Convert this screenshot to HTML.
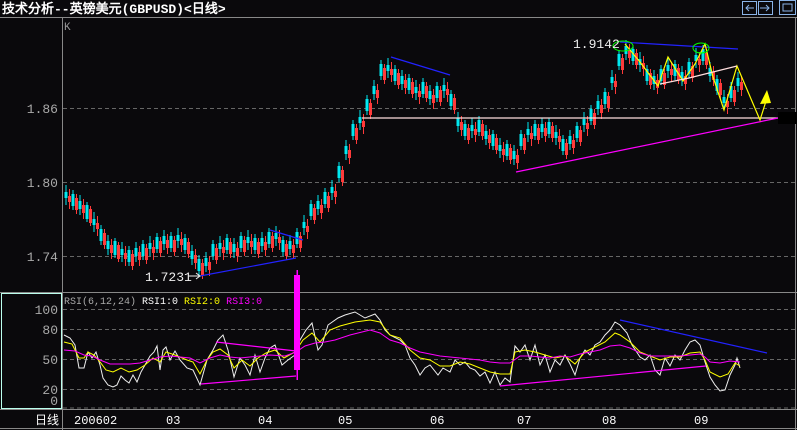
<!DOCTYPE html>
<html><head><meta charset="utf-8"><style>
html,body{margin:0;padding:0;background:#0a090c;width:797px;height:430px;overflow:hidden}
svg{display:block}
text{font-family:"Liberation Mono","WenQuanYi Zen Hei",monospace}
</style></head><body>
<svg width="797" height="430" viewBox="0 0 797 430" xmlns="http://www.w3.org/2000/svg" xmlns:xlink="http://www.w3.org/1999/xlink">
<defs>
<path id="W" fill="none" d="M66 185V205M73 190V210M80 195V215M87 202V222M94 212V232M101 225V245M108 235V255M115 238V258M122 242V262M129 246V266M136 242V262M143 240V260M150 236V256M157 233V253M164 230V250M171 232V252M178 228V248M185 234V254M192 245V265M199 255V275M206 252V272M213 240V260M220 236V256M227 234V254M234 238V258M241 232V252M248 230V250M255 234V254M262 232V252M269 228V248M276 226V246M283 236V256M290 235V255M297 228V248M304 215V235M311 200V220M318 195V215M325 188V208M332 180V200M339 162V182M346 140V160M353 120V140M360 110V130M367 95V115M374 80V100M381 60V80M388 58V78M395 65V85M402 70V90M409 74V94M416 80V100M423 78V98M430 85V105M437 82V102M444 78V98M451 90V110M458 112V132M465 120V140M472 118V138M479 116V136M486 125V145M493 130V150M500 138V158M507 140V160M514 145V165M521 130V150M528 122V142M535 120V140M542 118V138M549 118V138M556 125V145M563 135V155M570 130V150M577 122V142M584 112V132M591 105V125M598 95V115M605 88V108M612 70V90M619 50V70M626 40V60M633 45V65M640 52V72M647 65V85M654 70V90M661 65V85M668 58V78M675 60V80M682 66V86M689 58V78M696 48V68M703 45V65M710 62V82M717 75V95M724 90V110M731 82V102M738 72V92"/>
<path id="B" fill="none" d="M66 192V198M73 194V206M80 201V209M87 205V219M94 219V225M101 229V241M108 241V249M115 241V255M122 249V255M129 250V262M136 248V256M143 244V256M150 243V249M157 237V249M164 236V244M171 236V248M178 235V241M185 238V250M192 251V259M199 259V271M206 258V266M213 244V256M220 243V249M227 238V250M234 244V252M241 236V248M248 237V243M255 238V250M262 238V246M269 232V244M276 233V239M283 240V252M290 241V249M297 232V244M304 222V228M311 204V216M318 201V209M325 192V204M332 187V193M339 166V178M346 146V154M353 124V136M360 117V123M367 99V111M374 86V94M381 64V76M388 65V71M395 69V81M402 76V84M409 78V90M416 87V93M423 82V94M430 91V99M437 86V98M444 85V91M451 94V106M458 118V126M465 124V136M472 125V131M479 120V132M486 131V139M493 134V146M500 145V151M507 144V156M514 151V159M521 134V146M528 129V135M535 124V136M542 124V132M549 122V134M556 132V138M563 139V151M570 136V144M577 126V138M584 119V125M591 109V121M598 101V109M605 92V104M612 77V83M619 54V66M626 46V54M633 49V61M640 59V65M647 69V81M654 76V84M661 69V81M668 65V71M675 64V76M682 72V80M689 62V74M696 55V61M703 49V61M710 68V76M717 79V91M724 97V103M731 86V98M738 78V86"/>
</defs>
<rect width="797" height="430" fill="#0a090c"/>
<text x="2" y="13" fill="#fff" font-size="13" font-weight="bold" font-family="'Liberation Sans','WenQuanYi Zen Hei',sans-serif">技术分析--英镑美元(GBPUSD)&lt;日线&gt;</text>
<line x1="0" y1="17.5" x2="797" y2="17.5" stroke="#888"/>
<g fill="none" stroke="#8ab4e8">
<rect x="742.5" y="1.5" width="14" height="13"/><rect x="758.5" y="1.5" width="14" height="13"/><rect x="779.5" y="0.5" width="16" height="14"/><rect x="783" y="4" width="9" height="7"/>
<path d="M754 8H746M749 5L746 8L749 11M760 8H769M766 5L769 8L766 11"/>
</g>
<line x1="62.5" y1="18" x2="62.5" y2="430" stroke="#888"/>
<line x1="795.5" y1="18" x2="795.5" y2="430" stroke="#888"/>
<line x1="0" y1="292.5" x2="797" y2="292.5" stroke="#888"/>
<line x1="0" y1="409.5" x2="797" y2="409.5" stroke="#888"/>
<line x1="0" y1="428.5" x2="797" y2="428.5" stroke="#888"/>
<rect x="1.5" y="293.5" width="60" height="115" fill="none" stroke="#bfe"/>
<text x="64" y="30" fill="#999" font-size="11">K</text>
<g stroke="#666" stroke-dasharray="4,3">
<line x1="63" y1="108.5" x2="795" y2="108.5"/><line x1="63" y1="182.5" x2="795" y2="182.5"/><line x1="63" y1="256.5" x2="795" y2="256.5"/>
<line x1="63" y1="309.5" x2="795" y2="309.5"/><line x1="63" y1="329.5" x2="795" y2="329.5"/><line x1="63" y1="359.5" x2="795" y2="359.5"/><line x1="63" y1="389.5" x2="795" y2="389.5"/><line x1="63" y1="408" x2="795" y2="408"/>
</g>
<g fill="#aaa" font-size="13" text-anchor="end" font-family="'Liberation Sans',sans-serif">
<text x="58" y="113">1.86</text><text x="58" y="187">1.80</text><text x="58" y="261">1.74</text>
<text x="58" y="314">100</text><text x="58" y="334">80</text><text x="58" y="364">50</text><text x="58" y="394">20</text><text x="58" y="405">0</text>
</g>
<g fill="#fff" font-size="12" font-family="'Liberation Sans','WenQuanYi Zen Hei',sans-serif">
<text x="35" y="424">日线</text><text x="74" y="424">200602</text><text x="166" y="424">03</text><text x="258" y="424">04</text><text x="338" y="424">05</text><text x="430" y="424">06</text><text x="517" y="424">07</text><text x="602" y="424">08</text><text x="694" y="424">09</text>
</g>
<text x="64" y="304" font-size="10" fill="#aaa">RSI(6,12,24) <tspan fill="#fff">RSI1:0</tspan> <tspan fill="#ff0">RSI2:0</tspan> <tspan fill="#f0f">RSI3:0</tspan></text>

<g stroke="#00e8f0"><use xlink:href="#W" href="#W"/><use xlink:href="#B" href="#B" stroke-width="3"/></g>
<g stroke="#ff3a3a" transform="translate(3.5,4)"><use xlink:href="#W" href="#W"/><use xlink:href="#B" href="#B" stroke-width="3"/></g>

<polyline fill="none" stroke="#eee" points="64,335 70,338 75,345 79,368 84,368 88,352 92,358 96,352 100,365 103,378 108,385 113,387 117,385 121,376 125,380 129,383 133,375 137,382 141,372 145,365 150,356 154,352 157,346 160,370 163,350 166,347 170,360 175,351 180,360 187,368 193,370 200,385 207,360 213,350 218,340 223,335 228,350 234,377 240,358 245,365 250,375 255,355 260,372 265,358 270,348 275,345 282,365 288,360 295,355 300,340 306,330 312,323 318,350 322,345 328,325 338,318 345,315 355,312 365,318 375,314 380,320 385,330 390,335 400,340 405,345 410,358 415,365 420,375 425,368 430,365 438,375 443,368 450,372 455,360 460,365 465,362 470,368 475,370 480,376 485,372 490,383 495,372 500,385 505,378 510,382 515,346 520,352 525,345 530,360 535,345 540,365 545,355 550,372 555,360 560,365 565,355 570,364 575,375 580,358 585,350 590,355 595,345 600,342 605,335 610,330 615,322 620,325 627,333 632,345 640,357 645,360 650,355 655,370 660,375 665,358 670,366 675,355 680,360 685,350 690,342 695,340 700,345 705,362 710,377 715,385 720,391 725,390 730,375 735,365 737,358 740,368"/>
<polyline fill="none" stroke="#ff0" points="64,342 72,344 79,358 84,358 88,352 94,355 100,362 106,370 113,372 121,368 129,372 137,370 145,365 153,358 160,362 166,352 175,355 187,360 193,362 200,374 207,360 213,352 220,349 228,355 234,368 242,360 250,366 258,358 266,353 275,350 284,358 295,352 303,340 312,333 320,342 330,330 340,326 355,322 370,320 380,322 390,335 400,338 410,350 420,358 430,360 440,366 450,366 460,362 470,364 480,368 490,372 500,374 510,374 515,352 525,350 535,352 545,355 555,358 565,356 575,364 585,352 595,347 605,342 615,333 620,335 630,342 640,352 650,356 660,360 670,357 680,357 690,353 700,352 705,360 710,372 720,377 728,374 735,363 740,366"/>
<polyline fill="none" stroke="#f0f" points="64,350 75,351 84,355 92,356 100,360 110,364 120,364 130,364 140,363 150,360 160,357 170,356 180,357 190,358 200,363 210,358 220,355 230,357 240,358 250,357 260,356 270,355 285,356 296,352 305,346 315,343 325,342 335,340 350,335 370,330 380,333 390,340 400,343 410,348 420,352 430,354 440,356 450,357 460,358 470,359 480,360 490,362 500,363 510,363 520,356 530,356 540,357 550,358 560,356 570,357 580,354 590,352 600,350 610,346 620,345 630,348 640,353 650,356 660,356 670,356 680,356 690,355 700,354 705,357 710,362 720,363 730,361 740,362"/>

<line x1="362" y1="118" x2="778" y2="118" stroke="#fdd" stroke-width="1.2"/>
<line x1="516" y1="172" x2="778" y2="118" stroke="#f0f" stroke-width="1.2"/>
<g stroke="#22f" stroke-width="1.2">
<line x1="391" y1="57" x2="450" y2="75"/><line x1="620" y1="42" x2="738" y2="49"/>
<line x1="200" y1="276" x2="296" y2="258"/><line x1="270" y1="230" x2="303" y2="240"/>
</g>
<polyline fill="none" stroke="#ff0" stroke-width="1.2" points="625,44 640,62 658,86 668,57 683,81 695,64 705,44 713,77 724,110 737,66 760,120 767,98"/>
<polyline fill="none" stroke="#fdd" stroke-width="1.2" points="660,84 689,78 737,66"/>
<polygon points="760,104 767,90 771,103" fill="#ff0"/>
<g fill="none" stroke="#0f0"><ellipse cx="623" cy="46" rx="10" ry="5"/><ellipse cx="701" cy="48" rx="8" ry="5"/></g>
<text x="573" y="48" fill="#eee" font-size="13" font-family="'Liberation Sans',sans-serif">1.9142</text>
<text x="145" y="281" fill="#eee" font-size="13" font-family="'Liberation Sans',sans-serif">1.7231</text>
<path d="M188 276H200M196 273L200 276L196 279" stroke="#eee" fill="none"/>
<rect x="778" y="112" width="19" height="12" fill="#000"/>
<g stroke="#f0f" stroke-width="1.2"><line x1="201" y1="384" x2="296" y2="376"/><line x1="216" y1="342" x2="296" y2="351"/><line x1="500" y1="386" x2="706" y2="366"/></g>
<line x1="620" y1="320" x2="767" y2="353" stroke="#22f" stroke-width="1.2"/>
<rect x="294" y="275" width="6" height="95" fill="#f0f"/><rect x="296.5" y="270" width="1.5" height="110" fill="#f0f"/>
</svg>
</body></html>
